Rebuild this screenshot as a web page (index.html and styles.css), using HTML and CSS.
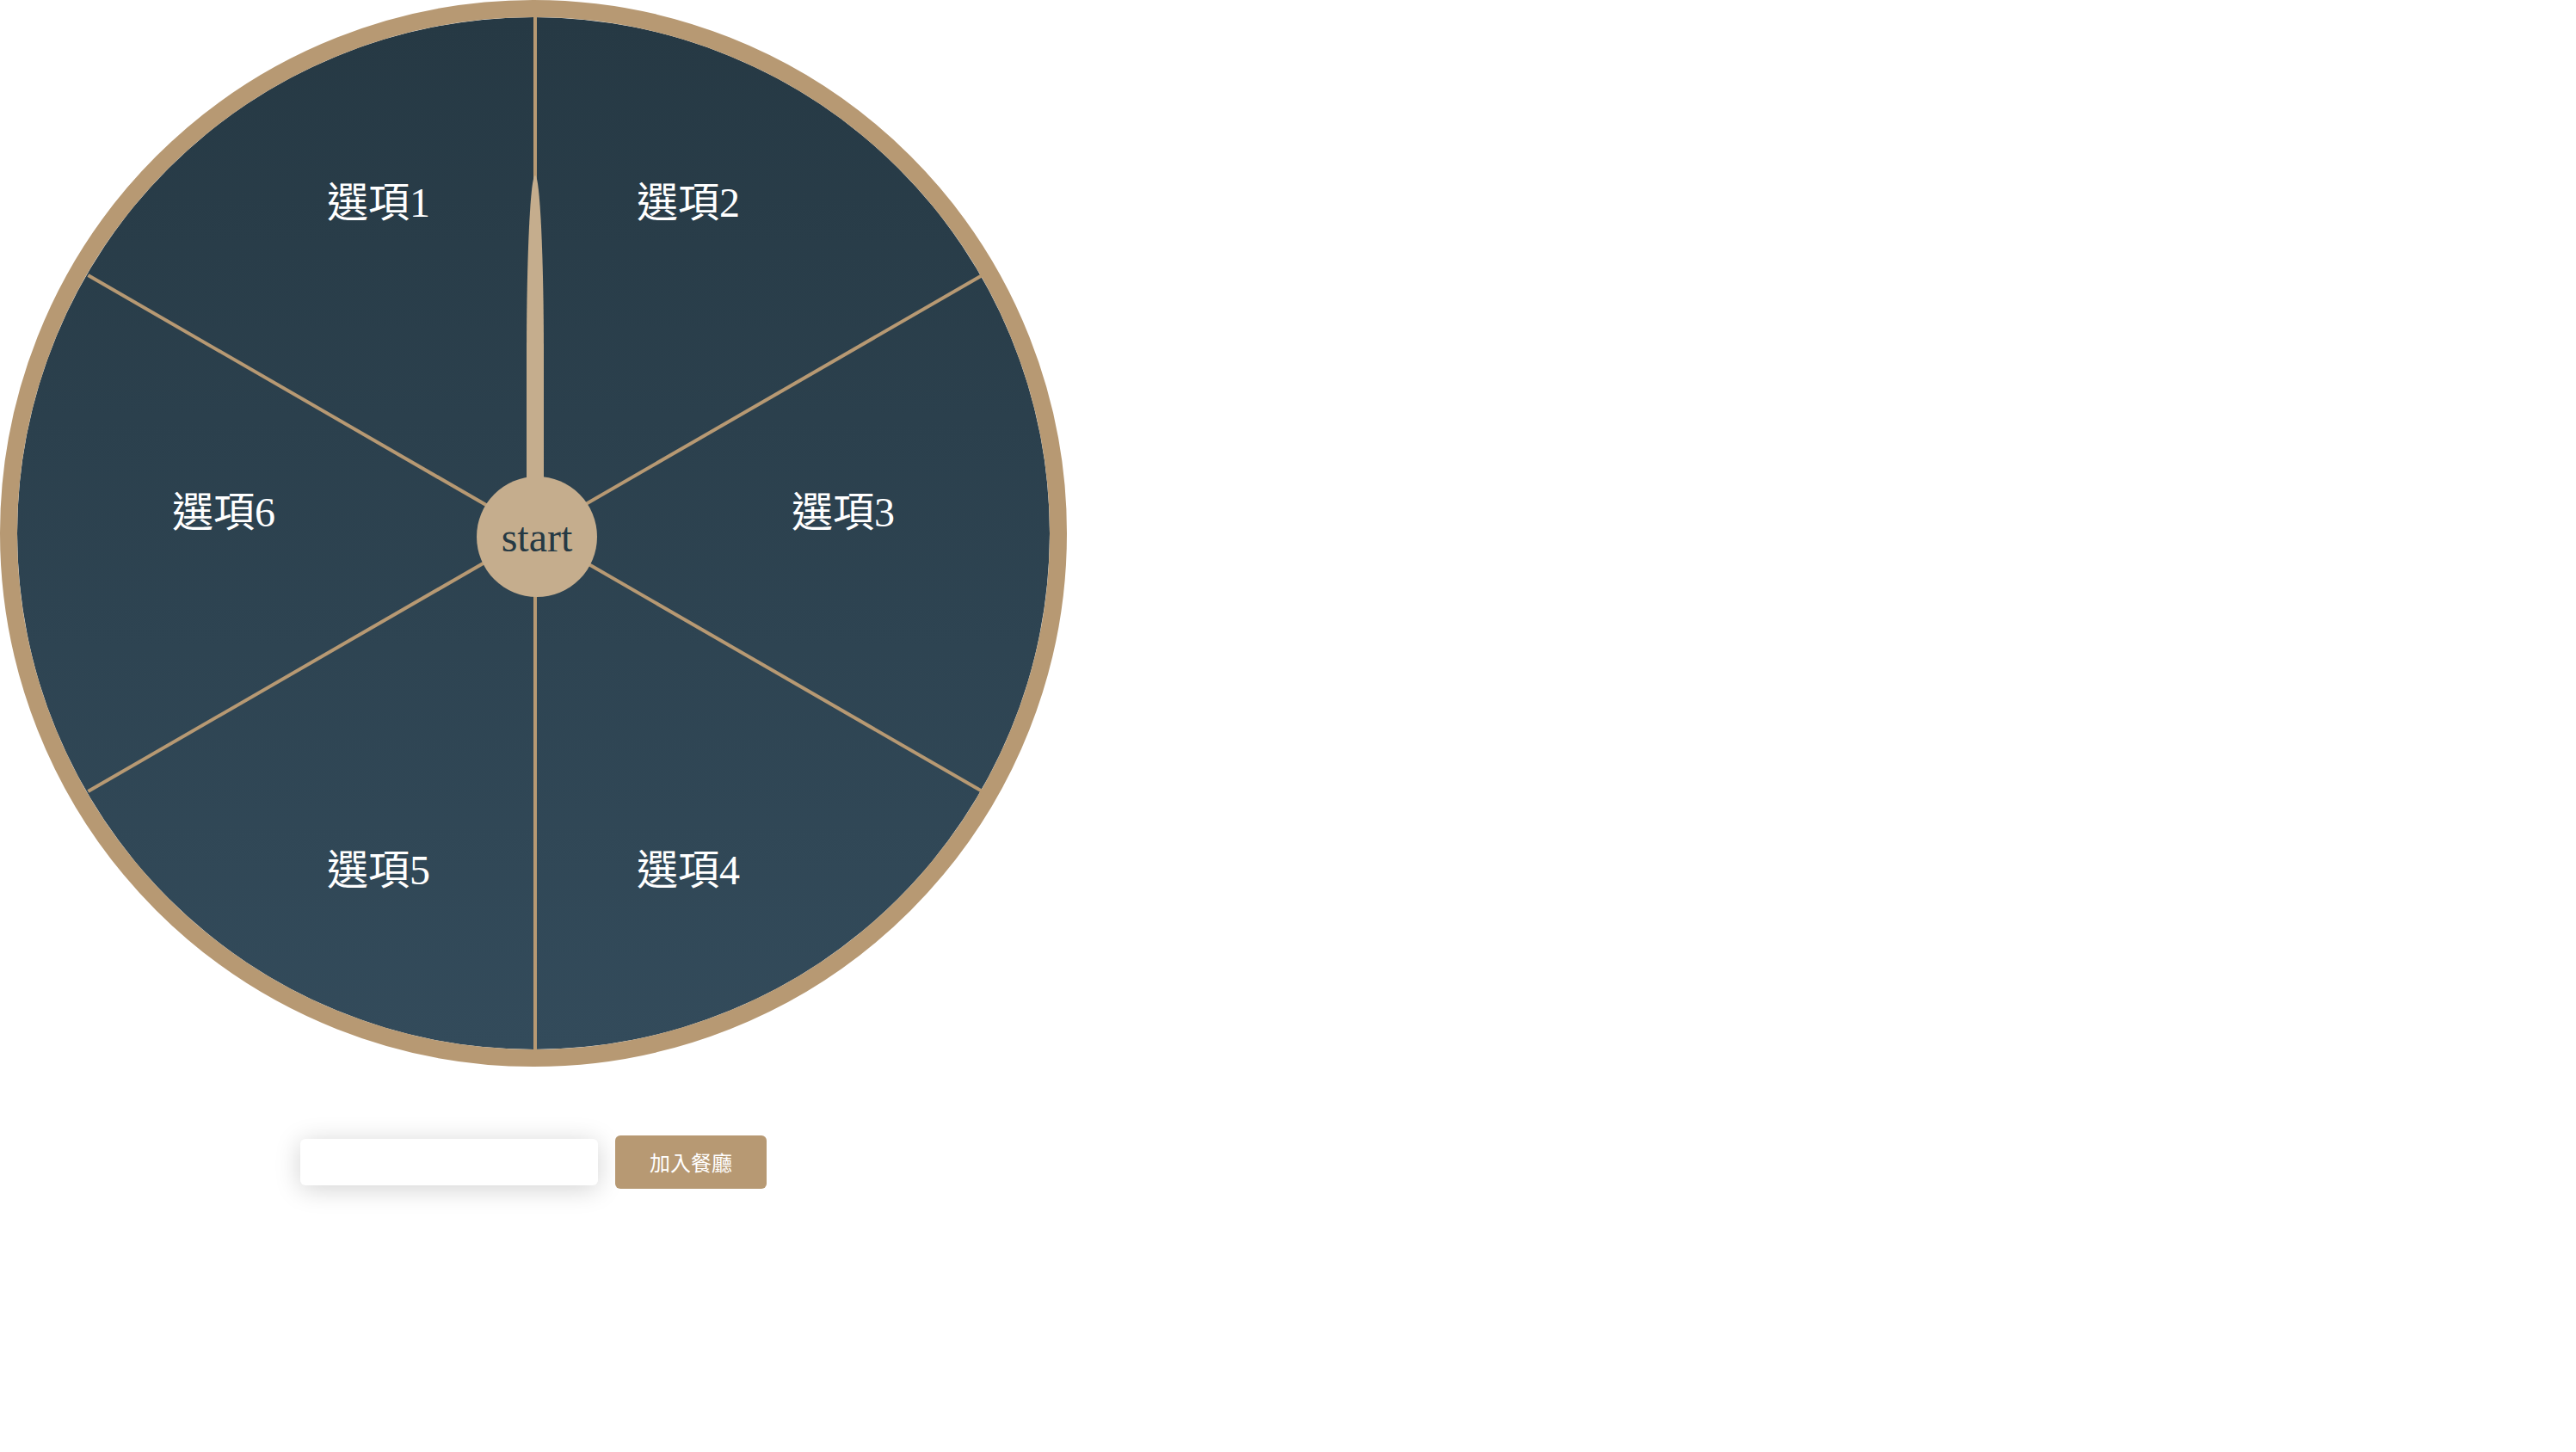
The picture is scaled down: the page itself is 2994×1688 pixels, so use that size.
FILE: index.html
```html
<!DOCTYPE html>
<html lang="zh-Hant">
<head>
<meta charset="utf-8">
<meta name="viewport" content="width=device-width, initial-scale=1">
<title>選項</title>
<link rel="stylesheet" href="styles.css">
</head>
<body>
<main class="picker">
  <section class="wheel">
    <span class="line line-a"></span>
    <span class="line line-b"></span>
    <span class="line line-c"></span>
    <span class="option option-1">選項1</span>
    <span class="option option-2">選項2</span>
    <span class="option option-3">選項3</span>
    <span class="option option-4">選項4</span>
    <span class="option option-5">選項5</span>
    <span class="option option-6">選項6</span>
    <span class="pointer"></span>
    <button class="start" type="button">start</button>
  </section>
  <form class="add-form">
    <input class="add-input" type="text" aria-label="餐廳">
    <button class="add-button" type="button">加入餐廳</button>
  </form>
</main>
</body>
</html>
```
FILE: styles.css
```css
* {
  box-sizing: border-box;
}

body {
  margin: 0;
  background: #fff;
  font-family: "Liberation Serif", "Noto Sans CJK TC", serif;
}

.picker {
  display: flex;
  flex-direction: column;
  gap: 80px;
  width: fit-content;
  min-height: 100vh;
}

.wheel {
  position: relative;
  width: 1240px;
  aspect-ratio: 1;
  border: 20px solid #b79973;
  border-radius: 50%;
  background: linear-gradient(#263944, #334b5b) padding-box;
}

/* Dividers run through the hub, each one a full diameter long */
.line {
  position: absolute;
  top: 0;
  left: 50%;
  width: 4px;
  height: 100%;
  background: #b79973;
}

.line-b {
  transform: rotate(60deg);
}

.line-c {
  transform: rotate(-60deg);
}

.option {
  position: absolute;
  padding-top: 8px;
  color: #fff;
  font-size: 48px;
  line-height: 56px;
}

.option-1 { top: 15%; left: 30%; }
.option-2 { top: 15%; left: 60%; }
.option-3 { top: 45%; left: 75%; }
.option-4 { bottom: 15%; left: 60%; }
.option-5 { bottom: 15%; left: 30%; }
.option-6 { top: 45%; left: 15%; }

.pointer {
  position: absolute;
  bottom: 50%;
  left: 50%;
  width: 20px;
  height: 416px;
  margin-left: -8px;
  border-radius: 50% 50% 0 0;
  background: #c5ad8d;
}

.start {
  position: absolute;
  top: 50%;
  left: 50%;
  width: 140px;
  height: 140px;
  margin: -66px;
  padding: 0;
  border: 0;
  border-radius: 50%;
  background: #c5ad8d;
  color: #263944;
  font: 48px "Liberation Serif", serif;
  cursor: pointer;
}

.add-form {
  display: flex;
  justify-content: center;
  align-items: center;
  gap: 20px;
}

.add-input {
  width: 346px;
  height: 54px;
  padding: 0 20px;
  border: 0;
  border-radius: 6px;
  background: #fff;
  box-shadow: 0 4px 30px rgba(0, 0, 0, 0.18);
  font-size: 24px;
}

.add-button {
  padding: 12px 40px;
  border: 0;
  border-radius: 6px;
  background: #b79973;
  color: #fff;
  font: 24px/38px "Noto Sans CJK TC", sans-serif;
  cursor: pointer;
}
```
